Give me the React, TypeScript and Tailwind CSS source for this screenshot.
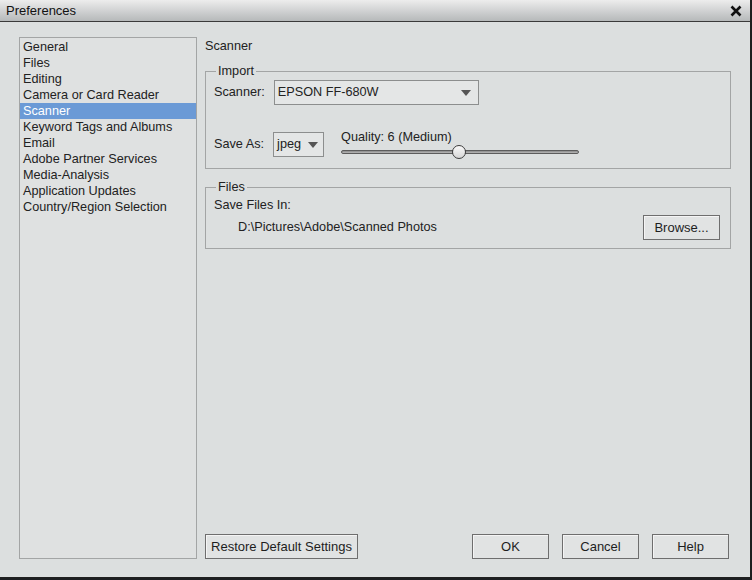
import React from "react";

const categories = [
  "General",
  "Files",
  "Editing",
  "Camera or Card Reader",
  "Scanner",
  "Keyword Tags and Albums",
  "Email",
  "Adobe Partner Services",
  "Media-Analysis",
  "Application Updates",
  "Country/Region Selection",
];

function Caret() {
  return (
    <svg width="10" height="6" viewBox="0 0 10 6" className="shrink-0">
      <path d="M0 0 L10 0 L5 6 Z" fill="#555" />
    </svg>
  );
}

function Button({ label, width }: { label: string; width: string }) {
  return (
    <button
      className={`h-[25px] ${width} border border-[#6e6e6e] bg-[#e1e3e3] text-[13px] text-[#1e1e1e] shadow-[inset_1px_1px_0_#f4f4f4]`}
    >
      {label}
    </button>
  );
}

export default function App() {
  const selected = "Scanner";

  return (
    <div
      className="h-[580px] w-[752px] bg-[#1d1f22]"
      style={{ fontFamily: '"Liberation Sans", Arial, sans-serif' }}
    >
      <div className="flex h-[578px] w-[751px] flex-col border-r border-b border-[#202020] bg-[#dcdfdf]">
        {/* Title bar */}
        <div className="flex h-[22px] shrink-0 items-center justify-between border-b border-[#3a3a3a] bg-gradient-to-b from-[#ededed] to-[#b6b9ba] pl-[6px] pr-[8px]">
          <span className="text-[13px] text-[#111]">Preferences</span>
          <svg width="12" height="12" viewBox="0 0 12 12">
            <path d="M1.5 1.5 L10.5 10.5 M10.5 1.5 L1.5 10.5" stroke="#111" strokeWidth="2.6" />
          </svg>
        </div>

        {/* Body */}
        <div className="flex flex-1 gap-[8px] pt-[15px] pb-[18px] pl-[19px] pr-[19px] text-[12.7px] text-[#222]">
          {/* Category list */}
          <div className="w-[178px] shrink-0 border border-[#a3a5a5] bg-[#dfe1e1] pt-[1px]">
            {categories.map((c) => (
              <div
                key={c}
                className={`h-[16px] pl-[3px] leading-[16px] ${
                  c === selected ? "bg-[#6b9ad6] text-white" : ""
                }`}
              >
                {c}
              </div>
            ))}
          </div>

          {/* Panel */}
          <div className="flex flex-1 flex-col">
            <div className="h-[16px] pt-[1px] leading-[16px]">Scanner</div>

            <fieldset className="mt-[10px] h-[106px] border border-[#a3a5a5] px-[8px]">
              <legend className="ml-[2px] px-[2px] leading-[16px]">Import</legend>
              <div className="mt-[1px] flex items-center gap-[9px]">
                <span>Scanner:</span>
                <div className="flex h-[25px] w-[205px] items-center justify-between border border-[#8c8e8e] bg-[#e4e6e6] pl-[3px] pr-[7px]">
                  <span>EPSON FF-680W</span>
                  <Caret />
                </div>
              </div>
              <div className="mt-[24px] flex items-start">
                <div className="mt-[3px] flex items-center gap-[9px]">
                  <span>Save As:</span>
                  <div className="flex h-[25px] w-[51px] items-center justify-between border border-[#8c8e8e] bg-[#e4e6e6] pl-[3px] pr-[5px]">
                    <span>jpeg</span>
                    <Caret />
                  </div>
                </div>
                <div className="ml-[17px] flex flex-col">
                  <span className="pt-[1px] leading-[15px]">Quality: 6 (Medium)</span>
                  <div className="relative h-[15px] w-[238px]">
                    <div className="absolute top-[5px] left-0 h-[4px] w-full rounded-full border border-[#5c5c5c] bg-gradient-to-b from-[#8a8a8a] to-[#b8b8b8]" />
                    <div className="absolute top-0 left-[111px] h-[14px] w-[14px] rounded-full border border-[#3c3c3c] bg-gradient-to-b from-[#fafafa] to-[#d6d6d6]" />
                  </div>
                </div>
              </div>
            </fieldset>

            <fieldset className="mt-[10px] h-[70px] border border-[#a3a5a5] px-[8px]">
              <legend className="ml-[2px] px-[2px] leading-[16px]">Files</legend>
              <div className="mt-[2px] leading-[16px]">Save Files In:</div>
              <div className="mt-[2px] flex items-center justify-between pl-[24px] pr-[2px]">
                <span>D:\Pictures\Adobe\Scanned Photos</span>
                <Button label="Browse..." width="w-[77px]" />
              </div>
            </fieldset>

            <div className="mt-auto flex items-center pr-[2px]">
              <Button label="Restore Default Settings" width="w-[153px]" />
              <div className="ml-auto flex gap-[13px]">
                <Button label="OK" width="w-[77px]" />
                <Button label="Cancel" width="w-[77px]" />
                <Button label="Help" width="w-[77px]" />
              </div>
            </div>
          </div>
        </div>
      </div>
    </div>
  );
}
